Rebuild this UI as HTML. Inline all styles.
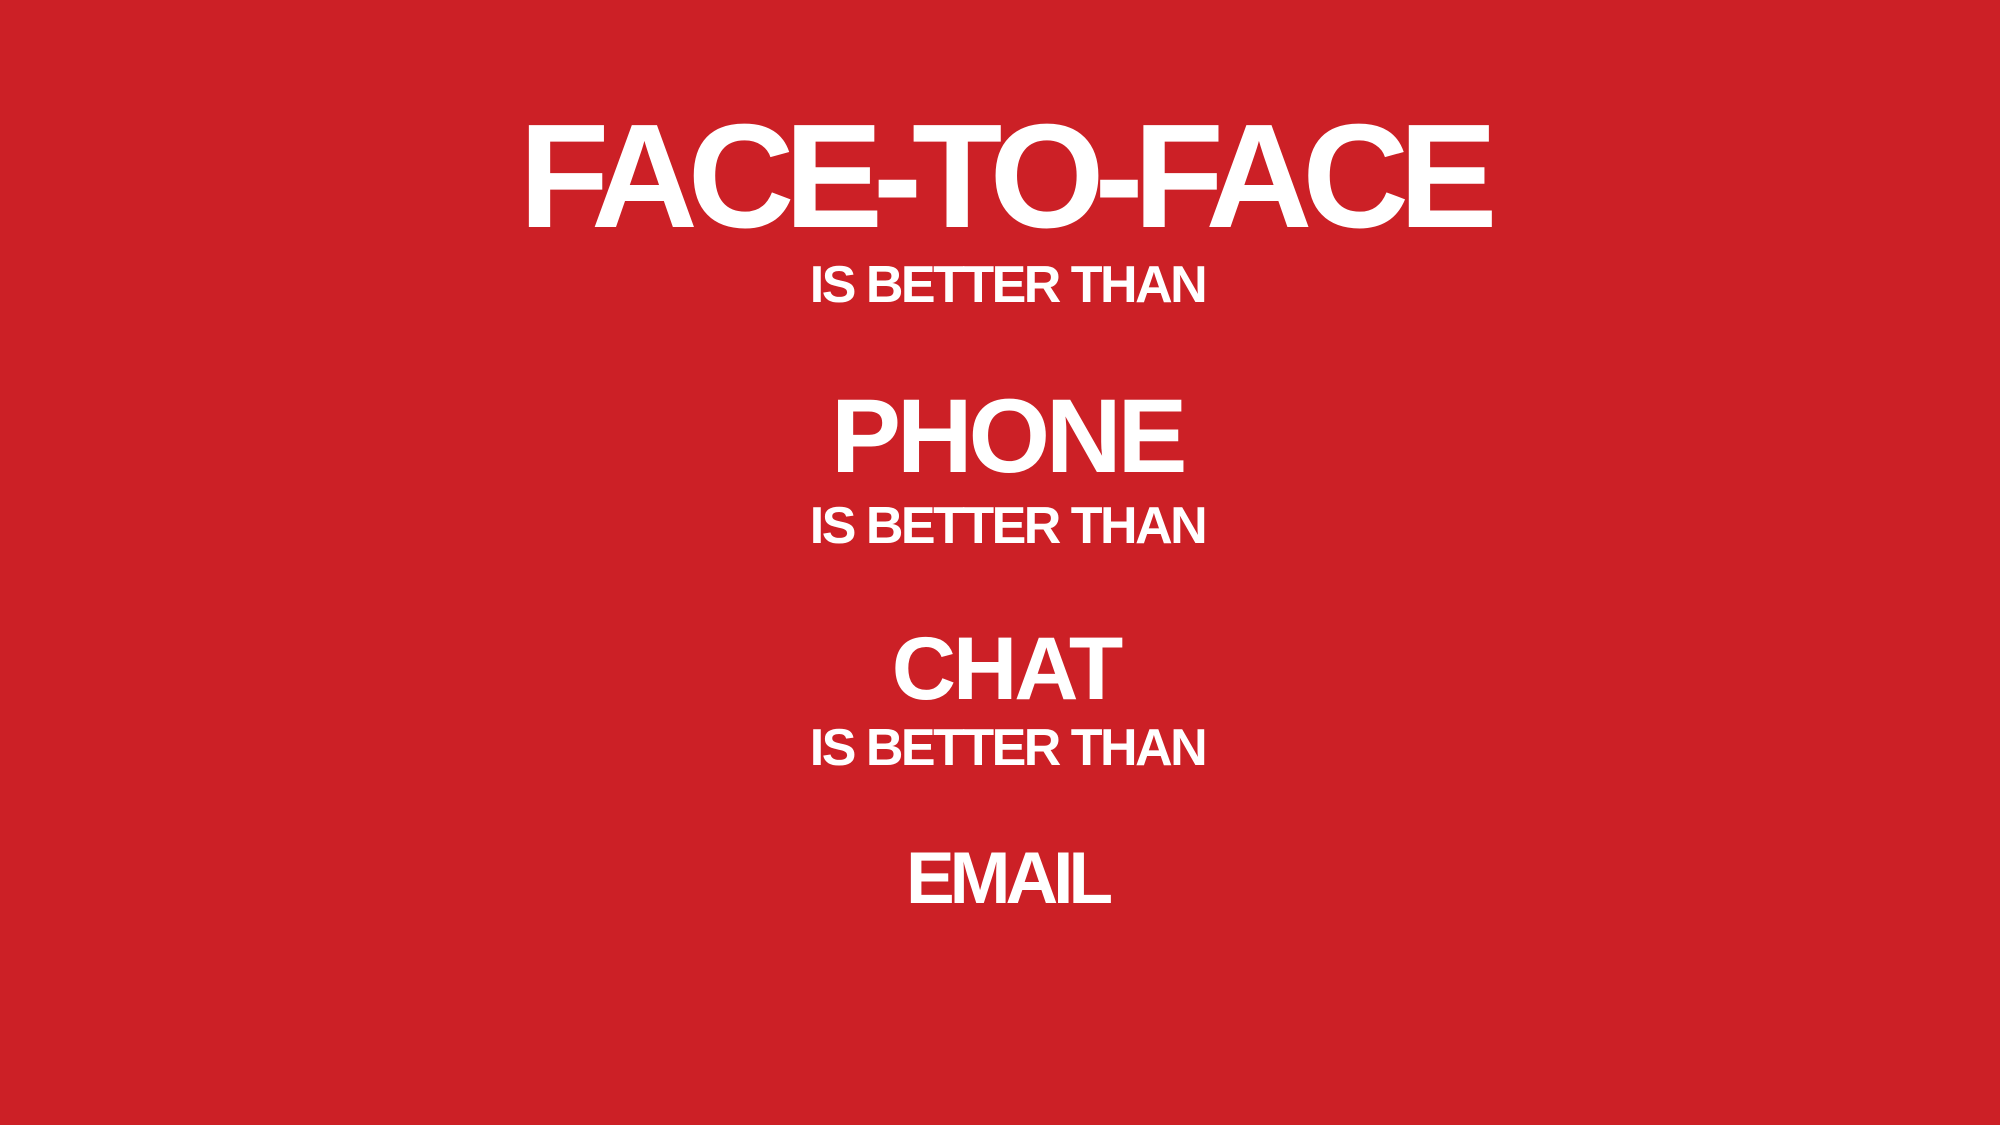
<!DOCTYPE html>
<html><head><meta charset="utf-8"><style>
html,body{margin:0;padding:0;}
body{width:2000px;height:1125px;background:#cc2026;position:relative;overflow:hidden;font-family:"Liberation Sans",sans-serif;font-weight:bold;color:#fff;}
.t{position:absolute;width:2000px;text-align:center;line-height:1;white-space:nowrap;}
.big{left:-7px;font-size:148px;top:103px;letter-spacing:-10.2px;padding-left:10.2px;}
.is{left:5px;font-size:52px;letter-spacing:-2.5px;padding-left:2.5px;}
.ph{left:3px;font-size:105px;top:384px;letter-spacing:-4.2px;padding-left:4.2px;}
.ch{left:3px;font-size:89px;top:624px;letter-spacing:-3px;padding-left:3px;}
.em{left:2px;font-size:73px;top:842px;letter-spacing:-5px;padding-left:5px;}
</style></head><body>
<div class="t big">FACE-TO-FACE</div>
<div class="t is" style="top:259px">IS BETTER THAN</div>
<div class="t ph">PHONE</div>
<div class="t is" style="top:500px">IS BETTER THAN</div>
<div class="t ch">CHAT</div>
<div class="t is" style="top:722px">IS BETTER THAN</div>
<div class="t em">EMAIL</div>
</body></html>
